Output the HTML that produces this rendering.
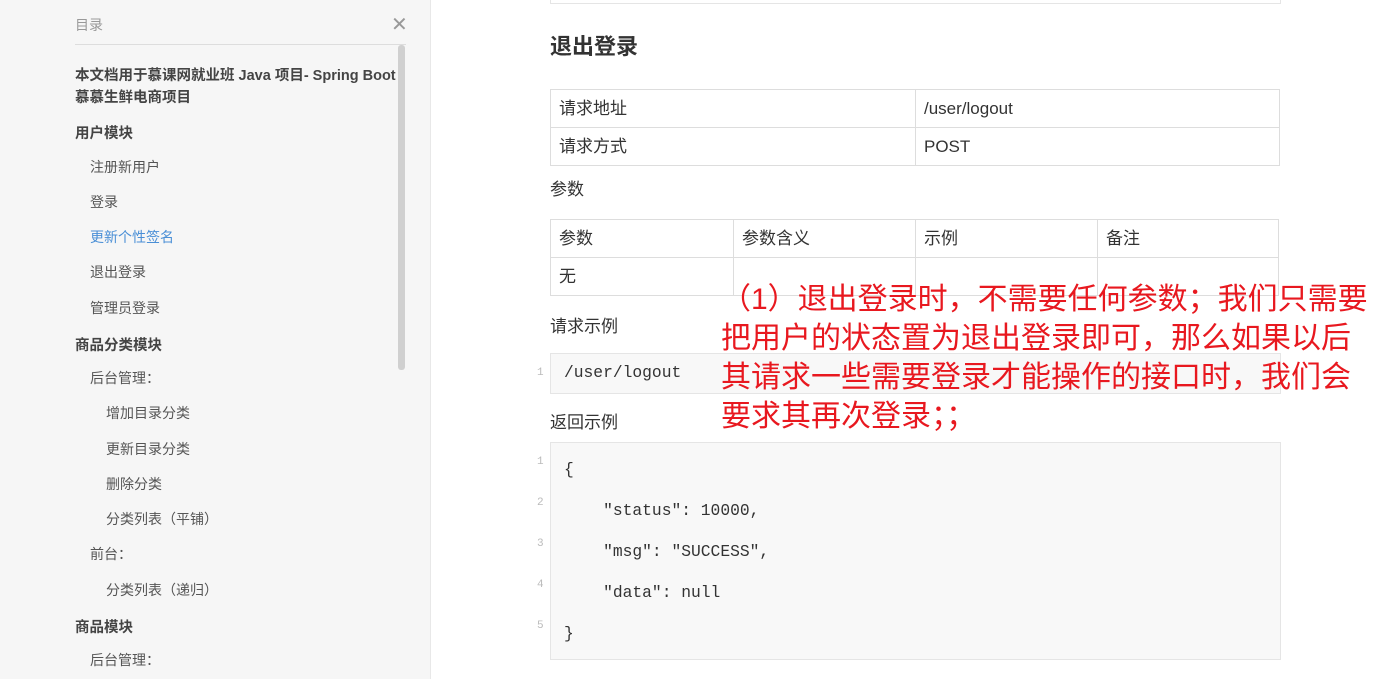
<!DOCTYPE html>
<html><head><meta charset="utf-8"><style>
*{margin:0;padding:0;box-sizing:border-box}
body{width:1379px;height:679px;overflow:hidden;background:#fff;font-family:"Liberation Sans","Noto Sans CJK SC",sans-serif;position:relative}
.side{position:absolute;left:0;top:0;width:431px;height:679px;background:#f6f6f6;border-right:1px solid #e8e8e8}
.a{position:absolute;white-space:pre}
.s{font-size:14px;color:#555}
.b{font-weight:bold;color:#444;font-size:14.5px}
.t{font-size:17px;color:#333}
table{position:absolute;border-collapse:collapse;font-size:17px;color:#333}
td{border:1px solid #ddd;height:38px;padding:0 8px;vertical-align:middle;line-height:20px}
.code{position:absolute;left:550px;width:731px;background:#f8f8f8;border:1px solid #e5e5e5;font-family:"Liberation Mono",monospace;font-size:16.3px;color:#333}
.ln{position:absolute;font-family:"Liberation Mono",monospace;font-size:11px;color:#bbb}
.red{position:absolute;left:721px;top:280px;font-size:30px;line-height:39px;color:#e8181f;white-space:nowrap}
</style></head><body>
<div class="side">
<div class="a s" style="left:75px;top:15px;color:#999">目录</div>
<div class="a" style="left:391px;top:12px;color:#999;font-size:20px">✕</div>
<div style="position:absolute;left:75px;top:44px;width:331px;height:1px;background:#ddd"></div>
<div style="position:absolute;left:398px;top:45px;width:7px;height:325px;background:#d0d0d0;border-radius:3px"></div>
<div class="a s b" style="left:75px;top:65px;line-height:22px">本文档用于慕课网就业班 Java 项目- Spring Boot
慕慕生鲜电商项目</div>
<div class="a s b" style="left:75px;top:122px">用户模块</div>
<div class="a s" style="left:90px;top:157px">注册新用户</div>
<div class="a s" style="left:90px;top:192px">登录</div>
<div class="a s" style="left:90px;top:227px;color:#4a8fd6">更新个性签名</div>
<div class="a s" style="left:90px;top:262px">退出登录</div>
<div class="a s" style="left:90px;top:298px">管理员登录</div>
<div class="a s b" style="left:75px;top:334px">商品分类模块</div>
<div class="a s" style="left:90px;top:368px">后台管理：</div>
<div class="a s" style="left:106px;top:403px">增加目录分类</div>
<div class="a s" style="left:106px;top:439px">更新目录分类</div>
<div class="a s" style="left:106px;top:474px">删除分类</div>
<div class="a s" style="left:106px;top:509px">分类列表（平铺）</div>
<div class="a s" style="left:90px;top:544px">前台：</div>
<div class="a s" style="left:106px;top:580px">分类列表（递归）</div>
<div class="a s b" style="left:75px;top:616px">商品模块</div>
<div class="a s" style="left:90px;top:650px">后台管理：</div>
</div>
<div style="position:absolute;left:550px;top:0;width:731px;height:4px;border:1px solid #e5e5e5;border-top:none"></div>
<div class="a" style="left:550px;top:29px;font-size:22px;font-weight:bold;color:#333">退出登录</div>
<table style="left:550px;top:89px;width:730px">
<tr><td style="width:365px">请求地址</td><td>/user/logout</td></tr>
<tr><td>请求方式</td><td>POST</td></tr></table>
<div class="a t" style="left:550px;top:175px">参数</div>
<table style="left:550px;top:219px;width:729px">
<tr><td style="width:183px">参数</td><td style="width:182px">参数含义</td><td style="width:182px">示例</td><td>备注</td></tr>
<tr><td>无</td><td></td><td></td><td></td></tr></table>
<div class="a t" style="left:550px;top:312px">请求示例</div>
<div class="code" style="top:353px;height:41px;padding:9px 13px">/user/logout</div>
<div class="ln" style="left:537px;top:367px">1</div>
<div class="a t" style="left:550px;top:408px">返回示例</div>
<div class="code" style="top:442px;height:218px">
<div class="a" style="left:13px;top:17px">{</div>
<div class="a" style="left:13px;top:58px">    "status": 10000,</div>
<div class="a" style="left:13px;top:99px">    "msg": "SUCCESS",</div>
<div class="a" style="left:13px;top:140px">    "data": null</div>
<div class="a" style="left:13px;top:181px">}</div>
</div>
<div class="ln" style="left:537px;top:456px">1</div>
<div class="ln" style="left:537px;top:497px">2</div>
<div class="ln" style="left:537px;top:538px">3</div>
<div class="ln" style="left:537px;top:579px">4</div>
<div class="ln" style="left:537px;top:620px">5</div>
<div class="red">（1）退出登录时，不需要任何参数；我们只需要<br>把用户的状态置为退出登录即可，那么如果以后<br>其请求一些需要登录才能操作的接口时，我们会<br>要求其再次登录；；</div>
</body></html>
